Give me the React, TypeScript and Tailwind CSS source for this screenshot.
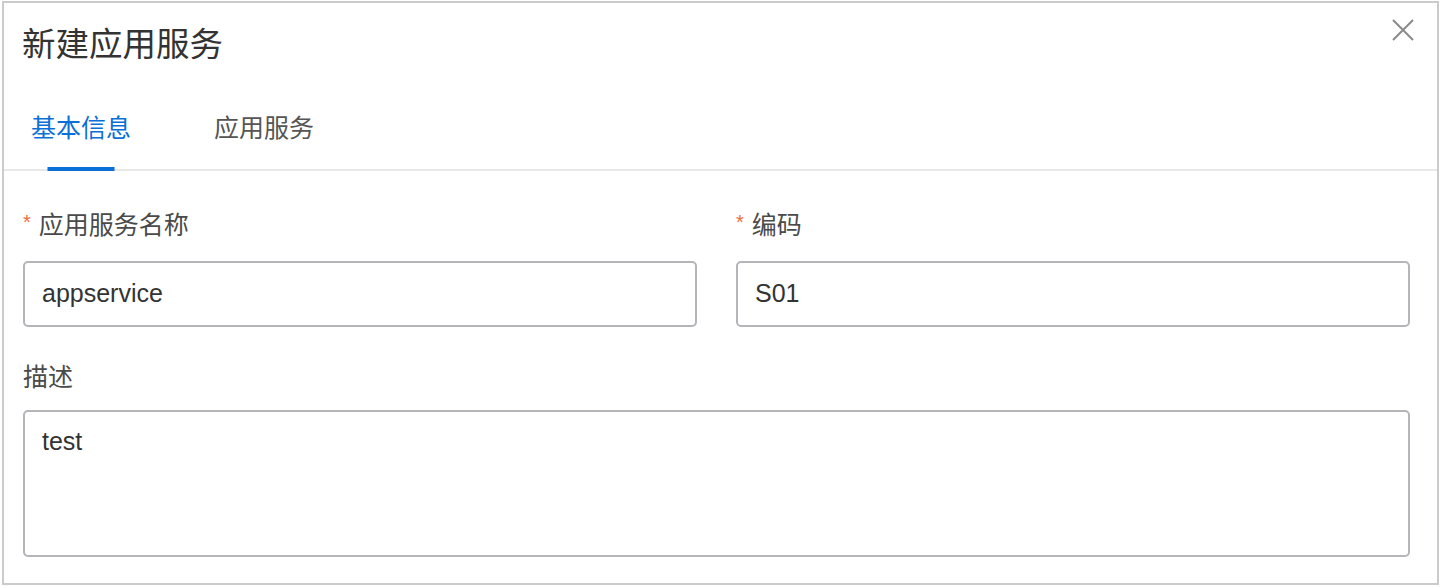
import { useState } from 'react';

const font = { fontFamily: '"Liberation Sans", "Noto Sans CJK SC", sans-serif' };

function Field({
  label,
  required,
  value,
  className,
}: {
  label: string;
  required?: boolean;
  value: string;
  className?: string;
}) {
  return (
    <div className={className}>
      <div className="flex h-[32px] items-center text-[25px] leading-[32px] text-[#4a4a4a]">
        {required ? <span className="mr-[8px] mt-[-6px] text-[20px] text-[#f26b3a]">*</span> : null}
        {label}
      </div>
      <div className="mt-[20px] flex h-[66px] items-center rounded-[5px] border-2 border-[#b4b4b9] bg-white pl-[17px] text-[25px] text-[#333]">
        {value}
      </div>
    </div>
  );
}

export default function App() {
  const [tab, setTab] = useState(0);
  const tabs = ['基本信息', '应用服务'];

  return (
    <div className="h-[587px] w-[1441px] bg-white pl-[2px] pt-[1px]" style={font}>
      <div className="relative flex h-[584px] w-[1437px] flex-col border-2 border-[#cbcbcb]">
        <button className="absolute right-[22px] top-[15px] text-[#8a8a8a]" aria-label="close">
          <svg width="24" height="24" viewBox="0 0 24 24" fill="none" stroke="currentColor" strokeWidth="2">
            <path d="M2 2 L22 22 M22 2 L2 22" />
          </svg>
        </button>

        <div className="pl-[18px] pt-[22px] text-[33.5px] leading-[40px] text-[#333]">新建应用服务</div>

        <div className="mt-[47px] flex border-b-2 border-[#e8e8e8] pl-[27px]">
          {tabs.map((t, i) => (
            <button
              key={t}
              onClick={() => setTab(i)}
              className={
                'relative pb-[25px] text-[25px] leading-[32px] ' +
                (i === 0 ? 'mr-[83px] ' : '') +
                (tab === i ? 'text-[#0a6fd6]' : 'text-[#555]')
              }
            >
              {t}
              {tab === i ? (
                <span className="absolute bottom-[-2px] left-1/2 h-[4px] w-[67px] -translate-x-1/2 bg-[#0a6fd6]" />
              ) : null}
            </button>
          ))}
        </div>

        <div className="px-[19px] pt-[38px]">
          <div className="flex gap-[39px]">
            <Field className="w-[674px]" label="应用服务名称" required value="appservice" />
            <Field className="w-[674px]" label="编码" required value="S01" />
          </div>

          <div className="mt-[34px] h-[32px] text-[25px] leading-[32px] text-[#4a4a4a]">描述</div>
          <div className="mt-[17px] h-[147px] w-[1387px] rounded-[5px] border-2 border-[#b4b4b9] pl-[17px] pt-[13px] text-[25px] leading-[32px] text-[#333]">
            test
          </div>
        </div>
      </div>
    </div>
  );
}
